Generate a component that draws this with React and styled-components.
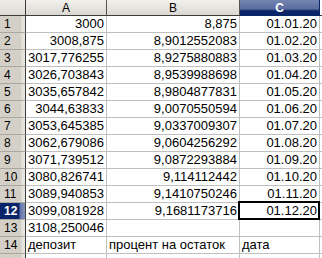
import React from "react";
import styled, { createGlobalStyle, css } from "styled-components";

const Global = createGlobalStyle`
  html, body { margin: 0; padding: 0; background: #fff; overflow: hidden; }
  body { font-family: "Liberation Sans", Arial, sans-serif; }
`;

const Sheet = styled.div`
  display: grid;
  grid-template-columns: 26px 81px 133px 80px 2px;
  grid-template-rows: 16px repeat(15, 17px);
  width: 322px;
  height: 258px;
  overflow: hidden;
  font-family: "Liberation Sans", Arial, sans-serif;
  font-size: 13px;
  color: #000;
`;

const Corner = styled.div`
  box-sizing: border-box;
  background: linear-gradient(#ecebe7, #dedcd6);
  border-right: 1px solid #3c3c3c;
  border-bottom: 1px solid #3c3c3c;
`;

const ColHeader = styled.div`
  box-sizing: border-box;
  display: flex;
  align-items: center;
  justify-content: center;
  font-size: 12px;
  padding-top: 1px;
  border-right: 1px solid #55534f;
  border-bottom: 1px solid #3c3c3c;
  background: linear-gradient(#f2f1ed, #e2e0da 70%, #d9d7d0);
  color: #000;
  ${(p) =>
    p.$selected &&
    css`
      background: linear-gradient(#7585b2 0%, #5a6c9f 60%, #0c2568 72%, #0a246a 100%);
      color: #fff;
      font-weight: bold;
      border-right-color: #0a246a;
      border-bottom-color: #0a246a;
    `}
  ${(p) =>
    p.$edge &&
    css`
      border-right: none;
      background: #fff;
    `}
`;

const RowHeader = styled.div`
  box-sizing: border-box;
  display: flex;
  align-items: center;
  padding-left: 4px;
  font-size: 12px;
  border-right: 1px solid #3c3c3c;
  border-bottom: 1px solid #a9a7a0;
  background: linear-gradient(to right, #d4d0c8 0px, #d4d0c8 21px, #e6e4df 22px, #e6e4df 25px);
  color: #000;
  ${(p) =>
    p.$selected &&
    css`
      background: linear-gradient(to right, #0a246a 0px, #0a246a 19px, #5d73a8 20px, #8795bd 25px);
      color: #fff;
      font-weight: bold;
    `}
`;

const Cell = styled.div`
  box-sizing: border-box;
  position: relative;
  display: flex;
  align-items: center;
  justify-content: ${(p) => (p.$align === "left" ? "flex-start" : "flex-end")};
  padding: 0 2px 1px 2px;
  white-space: nowrap;
  border-right: 1px solid #c0c0c0;
  border-bottom: 1px solid #c0c0c0;
  background: #fff;
  ${(p) =>
    p.$edge &&
    css`
      border-right: none;
    `}
  ${(p) =>
    p.$active &&
    css`
      &::after {
        content: "";
        position: absolute;
        left: -2px;
        top: -2px;
        right: -1px;
        bottom: -1px;
        border: 2px solid #000;
        pointer-events: none;
      }
    `}
`;

const colA = [
  "3000",
  "3008,875",
  "3017,776255",
  "3026,703843",
  "3035,657842",
  "3044,63833",
  "3053,645385",
  "3062,679086",
  "3071,739512",
  "3080,826741",
  "3089,940853",
  "3099,081928",
  "3108,250046",
];
const colB = [
  "8,875",
  "8,9012552083",
  "8,9275880883",
  "8,9539988698",
  "8,9804877831",
  "9,0070550594",
  "9,0337009307",
  "9,0604256292",
  "9,0872293884",
  "9,114112442",
  "9,1410750246",
  "9,1681173716",
];
const colC = [
  "01.01.20",
  "01.02.20",
  "01.03.20",
  "01.04.20",
  "01.05.20",
  "01.06.20",
  "01.07.20",
  "01.08.20",
  "01.09.20",
  "01.10.20",
  "01.11.20",
  "01.12.20",
];

export default function App() {
  const rows = [];
  for (let i = 0; i < 15; i++) {
    const n = i + 1;
    let a = colA[i] || "";
    let b = colB[i] || "";
    let c = colC[i] || "";
    let align = "right";
    if (n === 14) {
      a = "депозит";
      b = "процент на остаток";
      c = "дата";
      align = "left";
    }
    rows.push(
      <React.Fragment key={n}>
        <RowHeader $selected={n === 12}>{n <= 14 ? n : ""}</RowHeader>
        <Cell $align={align}>{a}</Cell>
        <Cell $align={align}>{b}</Cell>
        <Cell $align={align} $active={n === 12}>{c}</Cell>
        <Cell $edge />
      </React.Fragment>
    );
  }
  return (
    <>
      <Global />
      <Sheet>
        <Corner />
        <ColHeader>A</ColHeader>
        <ColHeader>B</ColHeader>
        <ColHeader $selected>C</ColHeader>
        <ColHeader $edge />
        {rows}
      </Sheet>
    </>
  );
}
